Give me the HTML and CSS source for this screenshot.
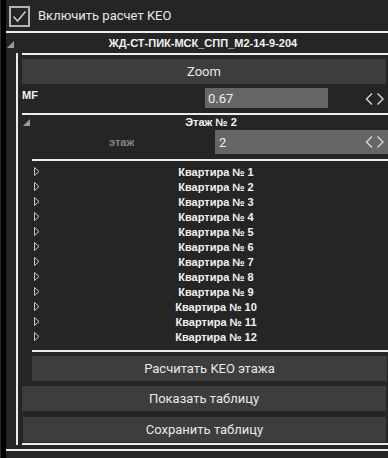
FILE: index.html
```html
<!DOCTYPE html>
<html>
<head>
<meta charset="utf-8">
<link rel="stylesheet" href="styles.css">
</head>
<body>
<div class="app">
  <div class="strip"></div>
  <div class="main">
    <div class="top">
      <span class="checkbox">
        <svg width="21" height="21" viewBox="0 0 21 21"><rect x="1" y="1" width="19" height="19" fill="none" stroke="#b4b4b4" stroke-width="2"/><path d="M4.5 10.5 L8.5 15 L16.5 5.5" fill="none" stroke="#c8c8c8" stroke-width="1.6"/></svg>
      </span>
      <span class="top-label">Включить расчет KEO</span>
    </div>
    <div class="title-row hdr">
      <span class="tri-down"></span>
      <span class="hdr-text">ЖД-СТ-ПИК-МСК_СПП_М2-14-9-204</span>
      <span></span>
    </div>
    <div class="group">
      <div class="group-inner">
        <div class="btn btn-zoom">Zoom</div>
        <div class="mf-row">
          <span class="mf-label">MF</span>
          <span class="field mf-field">0.67</span>
          <svg class="arrows" width="20" height="14" viewBox="0 0 20 14"><path d="M7 1.5 L1.5 7 L7 12.5 M12.5 1.5 L18 7 L12.5 12.5" fill="none" stroke="#d8d8d8" stroke-width="1.4"/></svg>
        </div>
        <div class="floor-hdr hdr">
          <span class="tri-down small"></span>
          <span class="hdr-text">Этаж № 2</span>
          <span></span>
        </div>
        <div class="floor-row">
          <span class="floor-label">этаж</span>
          <span class="field floor-field">2
            <svg class="arrows over" width="20" height="14" viewBox="0 0 20 14"><path d="M7 1.5 L1.5 7 L7 12.5 M12.5 1.5 L18 7 L12.5 12.5" fill="none" stroke="#d8d8d8" stroke-width="1.4"/></svg>
          </span>
        </div>
        <div class="sub">
          <div class="list">
            <div class="item"><svg class="tri-right" width="6" height="9" viewBox="0 0 6 9"><path d="M0.5 0.5 L5 4.5 L0.5 8.5 Z" fill="none" stroke="#c8c8c8" stroke-width="1"/></svg><span class="item-text">Квартира № 1</span><span></span></div>
            <div class="item"><svg class="tri-right" width="6" height="9" viewBox="0 0 6 9"><path d="M0.5 0.5 L5 4.5 L0.5 8.5 Z" fill="none" stroke="#c8c8c8" stroke-width="1"/></svg><span class="item-text">Квартира № 2</span><span></span></div>
            <div class="item"><svg class="tri-right" width="6" height="9" viewBox="0 0 6 9"><path d="M0.5 0.5 L5 4.5 L0.5 8.5 Z" fill="none" stroke="#c8c8c8" stroke-width="1"/></svg><span class="item-text">Квартира № 3</span><span></span></div>
            <div class="item"><svg class="tri-right" width="6" height="9" viewBox="0 0 6 9"><path d="M0.5 0.5 L5 4.5 L0.5 8.5 Z" fill="none" stroke="#c8c8c8" stroke-width="1"/></svg><span class="item-text">Квартира № 4</span><span></span></div>
            <div class="item"><svg class="tri-right" width="6" height="9" viewBox="0 0 6 9"><path d="M0.5 0.5 L5 4.5 L0.5 8.5 Z" fill="none" stroke="#c8c8c8" stroke-width="1"/></svg><span class="item-text">Квартира № 5</span><span></span></div>
            <div class="item"><svg class="tri-right" width="6" height="9" viewBox="0 0 6 9"><path d="M0.5 0.5 L5 4.5 L0.5 8.5 Z" fill="none" stroke="#c8c8c8" stroke-width="1"/></svg><span class="item-text">Квартира № 6</span><span></span></div>
            <div class="item"><svg class="tri-right" width="6" height="9" viewBox="0 0 6 9"><path d="M0.5 0.5 L5 4.5 L0.5 8.5 Z" fill="none" stroke="#c8c8c8" stroke-width="1"/></svg><span class="item-text">Квартира № 7</span><span></span></div>
            <div class="item"><svg class="tri-right" width="6" height="9" viewBox="0 0 6 9"><path d="M0.5 0.5 L5 4.5 L0.5 8.5 Z" fill="none" stroke="#c8c8c8" stroke-width="1"/></svg><span class="item-text">Квартира № 8</span><span></span></div>
            <div class="item"><svg class="tri-right" width="6" height="9" viewBox="0 0 6 9"><path d="M0.5 0.5 L5 4.5 L0.5 8.5 Z" fill="none" stroke="#c8c8c8" stroke-width="1"/></svg><span class="item-text">Квартира № 9</span><span></span></div>
            <div class="item"><svg class="tri-right" width="6" height="9" viewBox="0 0 6 9"><path d="M0.5 0.5 L5 4.5 L0.5 8.5 Z" fill="none" stroke="#c8c8c8" stroke-width="1"/></svg><span class="item-text">Квартира № 10</span><span></span></div>
            <div class="item"><svg class="tri-right" width="6" height="9" viewBox="0 0 6 9"><path d="M0.5 0.5 L5 4.5 L0.5 8.5 Z" fill="none" stroke="#c8c8c8" stroke-width="1"/></svg><span class="item-text">Квартира № 11</span><span></span></div>
            <div class="item"><svg class="tri-right" width="6" height="9" viewBox="0 0 6 9"><path d="M0.5 0.5 L5 4.5 L0.5 8.5 Z" fill="none" stroke="#c8c8c8" stroke-width="1"/></svg><span class="item-text">Квартира № 12</span><span></span></div>
          </div>
          <div class="btn btn-calc">Расчитать KEO этажа</div>
        </div>
        <div class="btn btn-show">Показать таблицу</div>
        <div class="btn btn-save">Сохранить таблицу</div>
      </div>
    </div>
    <div class="bottom-line"></div>
  </div>
</div>
</body>
</html>
```

FILE: styles.css
```css
html, body {
  margin: 0;
  padding: 0;
  background: #252525;
  overflow: hidden;
  width: 388px;
  height: 458px;
}
.app {
  display: flex;
  width: 400px;
  height: 458px;
  font-family: Roboto, "Liberation Sans", sans-serif;
  color: #e6e6e6;
}
.strip {
  width: 5px;
  flex: none;
  background: #000;
  border-left: 1px solid #2c2c2c;
}
.main {
  width: 394px;
  flex: none;
  background: #252525;
}
.top {
  height: 31px;
  display: flex;
  align-items: center;
  border-bottom: 2px solid #ececec;
}
.checkbox {
  display: flex;
  margin-left: 3px;
  margin-top: 1px;
}
.top-label {
  margin-left: 8px;
  font-size: 13px;
  color: #e8e8e8;
}
.hdr {
  display: grid;
  grid-template-columns: 14px 1fr 14px;
  align-items: center;
}
.hdr-text {
  text-align: center;
  font-family: "Liberation Sans", Arial, sans-serif;
  font-weight: bold;
  font-size: 11px;
  color: #f2f2f2;
}
.title-row {
  height: 20px;
}
.tri-down {
  width: 0;
  height: 0;
  border-left: 7px solid transparent;
  border-bottom: 7px solid #9a9a9a;
  margin-left: 1px;
  margin-top: 2px;
}
.tri-down.small {
  margin-left: 1px;
  margin-top: 1px;
}
.group {
  margin-left: 10px;
  border-left: 2px solid #ececec;
  padding-left: 4px;
}
.group-inner {
  border-top: 2px solid #ececec;
  border-bottom: 2px solid #ececec;
  padding-top: 4px;
  margin-bottom: 0;
}
.btn {
  height: 25px;
  background: #3d3d3d;
  font-size: 13px;
  color: #e8e8e8;
  display: flex;
  align-items: center;
  justify-content: center;
  margin-right: 14px;
}
.mf-row {
  height: 29px;
  display: flex;
  align-items: flex-start;
}
.mf-label {
  font-family: "Liberation Sans", Arial, sans-serif;
  font-weight: bold;
  font-size: 11px;
  color: #f2f2f2;
  margin-top: 5px;
  width: 183px;
}
.field {
  background: #666;
  font-size: 13px;
  color: #eeeeee;
  display: flex;
  align-items: center;
  box-sizing: border-box;
}
.mf-field {
  width: 123px;
  height: 20px;
  margin-top: 4px;
  padding-left: 3px;
}
.arrows {
  margin-left: auto;
  margin-right: 15px;
  margin-top: 8px;
}
.floor-hdr {
  border-top: 2px solid #ececec;
  height: 14px;
}
.floor-row {
  display: flex;
  align-items: center;
  margin-top: 1px;
  height: 24px;
}
.floor-label {
  width: 193px;
  box-sizing: border-box;
  padding-left: 87px;
  font-family: "Liberation Sans", Arial, sans-serif;
  font-weight: bold;
  font-size: 11px;
  color: #858585;
}
.floor-field {
  flex: 1;
  height: 24px;
  padding-left: 4px;
  position: relative;
}
.arrows.over {
  position: absolute;
  right: 15px;
  top: 5px;
  margin: 0;
}
.sub {
  margin-left: 10px;
  margin-top: 5px;
}
.list {
  border-top: 2px solid #ececec;
  border-bottom: 2px solid #ececec;
  padding-top: 3px;
  padding-bottom: 6px;
}
.item {
  height: 15px;
  display: grid;
  grid-template-columns: 12px 1fr 12px;
  align-items: center;
}
.tri-right {
  display: block;
  margin-left: 2px;
}
.item-text {
  text-align: center;
  font-family: "Liberation Sans", Arial, sans-serif;
  font-weight: bold;
  font-size: 11px;
  color: #f2f2f2;
}
.btn-calc {
  margin-top: 4px;
  margin-right: 13px;
}
.btn-show {
  margin-top: 5px;
}
.btn-save {
  margin-top: 6px;
  margin-left: 1px;
  margin-bottom: 1px;
}
.bottom-line {
  margin-top: 4px;
  border-top: 2px solid #ececec;
}
```
